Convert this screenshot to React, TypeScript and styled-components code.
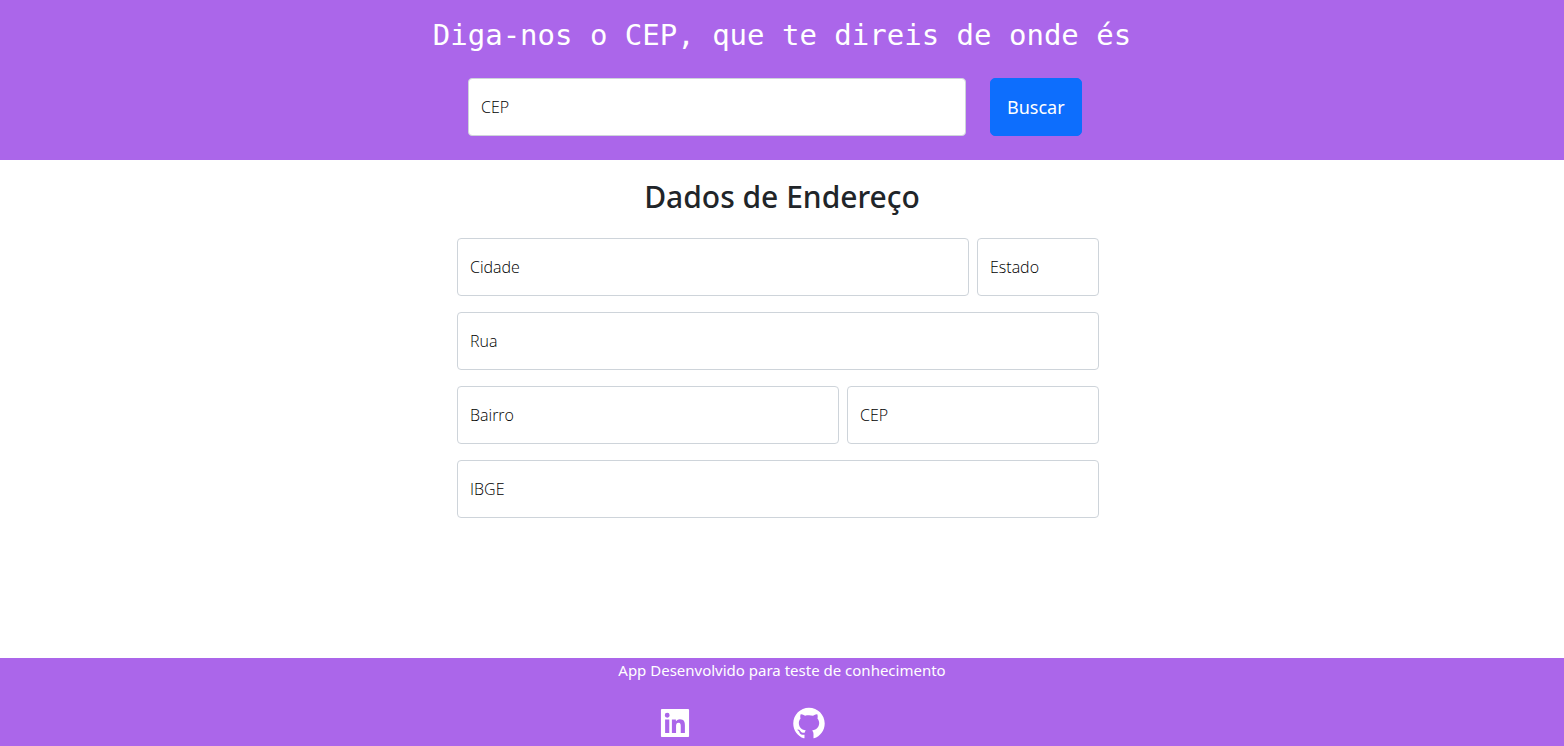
import React, { useState } from "react";
import styled, { createGlobalStyle } from "styled-components";
import { AiFillGithub, AiFillLinkedin } from "react-icons/ai";

const GlobalStyle = createGlobalStyle`
  *, *::before, *::after { box-sizing: border-box; }
  body {
    margin: 0;
    background: #fff;
    color: #212529;
    font: 400 15px/24px "Segoe UI", "Noto Sans", sans-serif;
  }
`;

const Page = styled.div`
  display: flex;
  flex-direction: column;
  min-height: 100vh;
`;

const Header = styled.header`
  padding: 16px 16px 24px;
  background: #ab66ea;
  color: #fff;
`;

const Title = styled.h1`
  margin: 0 0 24px;
  font: 400 29px/38px Consolas, "DejaVu Sans Mono", monospace;
  text-align: center;
`;

const SearchForm = styled.form`
  display: flex;
  gap: 24px;
  max-width: 628px;
  margin: 0 auto;
`;

const Field = styled.div<{ $width?: string }>`
  position: relative;
  flex: ${({ $width }) => ($width ? `0 1 ${$width}` : "1 1 0")};
  min-width: 0;
`;

const Input = styled.input`
  display: block;
  width: 100%;
  height: 58px;
  padding: 16px 12px;
  border: 1px solid #ced4da;
  border-radius: 4px;
  background: #fff;
  color: #212529;
  font: inherit;

  &:focus {
    outline: 0;
    border-color: #86b7fe;
    box-shadow: 0 0 0 4px rgba(13, 110, 253, 0.25);
  }
  &:focus,
  &:not(:placeholder-shown) {
    padding: 26px 12px 8px;
  }
  &::placeholder {
    color: transparent;
  }
`;

const Label = styled.label`
  position: absolute;
  top: 0;
  left: 0;
  padding: 17px 13px;
  color: #000;
  font-family: "Segoe UI", "Open Sans", sans-serif;
  font-size: 16px;
  font-weight: 300;
  pointer-events: none;

  ${Input}:focus + &,
  ${Input}:not(:placeholder-shown) + & {
    padding: 4px 13px;
    font-size: 13px;
  }
`;

const SearchButton = styled.button`
  height: 58px;
  padding: 8px 16px;
  border: 1px solid #0d6efd;
  border-radius: 5px;
  background: #0d6efd;
  color: #fff;
  font: inherit;
  font-size: 18px;
  cursor: pointer;

  &:hover {
    background: #0b5ed7;
  }
`;

const Main = styled.main`
  flex: 1;
  padding: 16px 0;
`;

const SectionTitle = styled.h2`
  margin: 0 0 20px;
  font-size: 30px;
  font-weight: 500;
  line-height: 42px;
  text-align: center;
`;

const AddressForm = styled.form`
  display: flex;
  flex-direction: column;
  gap: 16px;
  max-width: 650px;
  margin: 0 auto;
  padding-right: 8px;
`;

const Row = styled.div`
  display: flex;
  gap: 8px;
`;

const Footer = styled.footer`
  min-height: 88px;
  background: #ab66ea;
  color: #fff;
`;

const Credit = styled.p`
  margin: 0 0 23px;
  text-align: center;
`;

const SocialLinks = styled.nav`
  display: grid;
  grid-template-columns: repeat(2, 134px);
  max-width: 348px;
  margin: 0 auto;
`;

const SocialLink = styled.a`
  display: flex;
  justify-content: center;
  color: #fff;
  font-size: 36px;
`;

type FloatingFieldProps = { id: string; label: string; width?: string };

function FloatingField({ id, label, width }: FloatingFieldProps) {
  const [value, setValue] = useState("");
  return (
    <Field $width={width}>
      <Input
        id={id}
        type="text"
        placeholder=" "
        value={value}
        onChange={(event) => setValue(event.target.value)}
      />
      <Label htmlFor={id}>{label}</Label>
    </Field>
  );
}

export default function App() {
  return (
    <Page>
      <GlobalStyle />
      <Header>
        <Title>Diga-nos o CEP, que te direis de onde és</Title>
        <SearchForm onSubmit={(event) => event.preventDefault()}>
          <FloatingField id="busca-cep" label="CEP" width="498px" />
          <SearchButton type="submit">Buscar</SearchButton>
        </SearchForm>
      </Header>
      <Main>
        <SectionTitle>Dados de Endereço</SectionTitle>
        <AddressForm>
          <Row>
            <FloatingField id="cidade" label="Cidade" />
            <FloatingField id="estado" label="Estado" width="122px" />
          </Row>
          <Row>
            <FloatingField id="rua" label="Rua" />
          </Row>
          <Row>
            <FloatingField id="bairro" label="Bairro" />
            <FloatingField id="cep" label="CEP" width="252px" />
          </Row>
          <Row>
            <FloatingField id="ibge" label="IBGE" />
          </Row>
        </AddressForm>
      </Main>
      <Footer>
        <Credit>App Desenvolvido para teste de conhecimento</Credit>
        <SocialLinks>
          <SocialLink href="#linkedin" aria-label="LinkedIn">
            <AiFillLinkedin />
          </SocialLink>
          <SocialLink href="#github" aria-label="GitHub">
            <AiFillGithub />
          </SocialLink>
        </SocialLinks>
      </Footer>
    </Page>
  );
}
